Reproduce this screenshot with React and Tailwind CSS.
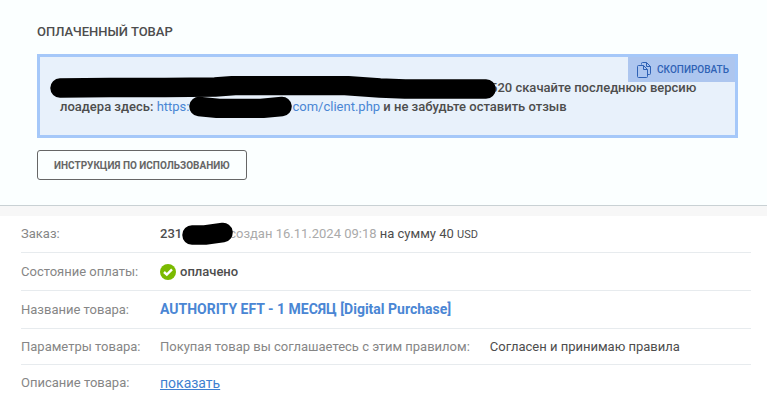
import React from "react";

// Black marker stroke that hides a private part of the text
const Redaction = ({ className, viewBox, d }) => (
  <svg
    aria-hidden="true"
    className={`absolute pointer-events-none ${className}`}
    viewBox={viewBox}
    fill="none"
    stroke="#000"
    strokeWidth="19.5"
    strokeLinecap="round"
    strokeLinejoin="round"
  >
    <path d={d} />
  </svg>
);

const CopyIcon = () => (
  <svg
    aria-hidden="true"
    className="w-4 h-[18px] shrink-0"
    viewBox="0 0 16 18"
    fill="none"
    stroke="#2f62b5"
    strokeLinejoin="round"
  >
    <path d="M4.5 3.5V2.5Q4.5 1.5 5.5 1.5H9.5L13.5 5.5V12.5Q13.5 13.5 12.5 13.5H10.5" />
    <path d="M9.5 1.5V5.5H13.5" />
    <path d="M6.5 4.5H1.5Q.5 4.5 .5 5.5V15.5Q.5 16.5 1.5 16.5H9.5Q10.5 16.5 10.5 15.5V8.5L6.5 4.5" />
    <path d="M6.5 4.5V8.5H10.5" />
  </svg>
);

const CheckIcon = () => (
  <svg aria-hidden="true" className="w-4 h-4 shrink-0" viewBox="0 0 16 16">
    <circle cx="8" cy="8" r="8" fill="#7aba00" />
    <path
      d="M4 8L6.8 10.6L12 5.4"
      fill="none"
      stroke="#fff"
      strokeWidth="2.4"
    />
  </svg>
);

const Row = ({ label, className, children }) => (
  <div
    className={`flex items-center border-b border-[#e7ebee] last:border-b-0 ${className}`}
  >
    <dt className="w-[139px] shrink-0 pb-px text-[#868686]">{label}</dt>
    <dd className="flex-1">{children}</dd>
  </div>
);

const App = () => {
  return (
    <main className="bg-white font-['Roboto',sans-serif] text-[13px] leading-[19px] text-[#4d4d4d]">
      <section className="bg-[#fbffff] border-b border-[#c9d1d4] pl-[37px] pr-[29px] pt-[22px] pb-[25px]">
        <h1 className="font-medium mb-[13px]">ОПЛАЧЕННЫЙ ТОВАР</h1>

        <div className="relative border-3 border-[#a5c8f9] bg-[#e8f1fb] pl-5 pr-4 pt-[21px] pb-[19px] font-medium">
          <button
            type="button"
            className="absolute top-0 right-0 h-[25px] pl-[9px] pr-1.5 flex items-center gap-1 bg-[#adc6ef] text-[#2f62b5] text-[10px] font-medium"
          >
            <CopyIcon />
            СКОПИРОВАТЬ
          </button>
          <p>
            <span className="relative inline-block w-[430px] h-3">
              <Redaction
                className="-left-2.5 -top-1 w-[446px] h-6"
                viewBox="50 76 446 24"
                d="M60 88L110 87.5H165L215 87L235 85.5H345L380 88L405 89H486"
              />
            </span>
            520 скачайте последнюю версию
            <br />
            лоадера здесь:{" "}
            <a href="#client" className="font-normal text-[#4a86d4]">
              https:
              <span className="relative inline-block w-[103px] h-3">
                <Redaction
                  className="left-0 -top-1 w-[104px] h-[23px]"
                  viewBox="190 97 104 23"
                  d="M200 108.5L220 110.5H262L283 108.5"
                />
              </span>
              com/client.php
            </a>{" "}
            и не забудьте оставить отзыв
          </p>
        </div>

        <button
          type="button"
          className="mt-3 h-[30px] px-4 border border-[#666] rounded-[3px] text-[10px] font-bold text-[#666]"
        >
          ИНСТРУКЦИЯ ПО ИСПОЛЬЗОВАНИЮ
        </button>
      </section>

      <div className="h-[10px] bg-[#f7f7f7]" />

      <dl className="pl-[21px] pr-4">
        <Row label="Заказ:" className="h-[37px]">
          <b className="font-medium">231</b>
          <span className="relative inline-block w-[47px] h-3">
            <Redaction
              className="left-0 -top-1 w-[51px] h-[23px]"
              viewBox="182 222 51 23"
              d="M192 235L205 235L223 232.5"
            />
          </span>
          <span className="text-[#aaa]">создан 16.11.2024 09:18</span> на сумму
          40 <span className="text-[11px]">USD</span>
        </Row>
        <Row label="Состояние оплаты:" className="h-[38px]">
          <span className="flex items-center gap-1 font-medium">
            <CheckIcon />
            оплачено
          </span>
        </Row>
        <Row label="Название товара:" className="h-[38px]">
          <a href="#product" className="text-[14px] font-bold text-[#4a86d4]">
            AUTHORITY EFT - 1 МЕСЯЦ [Digital Purchase]
          </a>
        </Row>
        <Row label="Параметры товара:" className="h-9">
          <span className="text-[#868686]">
            Покупая товар вы соглашаетесь с этим правилом:
          </span>
          <span className="ml-5">Согласен и принимаю правила</span>
        </Row>
        <Row label="Описание товара:" className="h-9">
          <a href="#description" className="text-[14px] text-[#3f7fd0] underline">
            показать
          </a>
        </Row>
      </dl>
    </main>
  );
};

export default App;
